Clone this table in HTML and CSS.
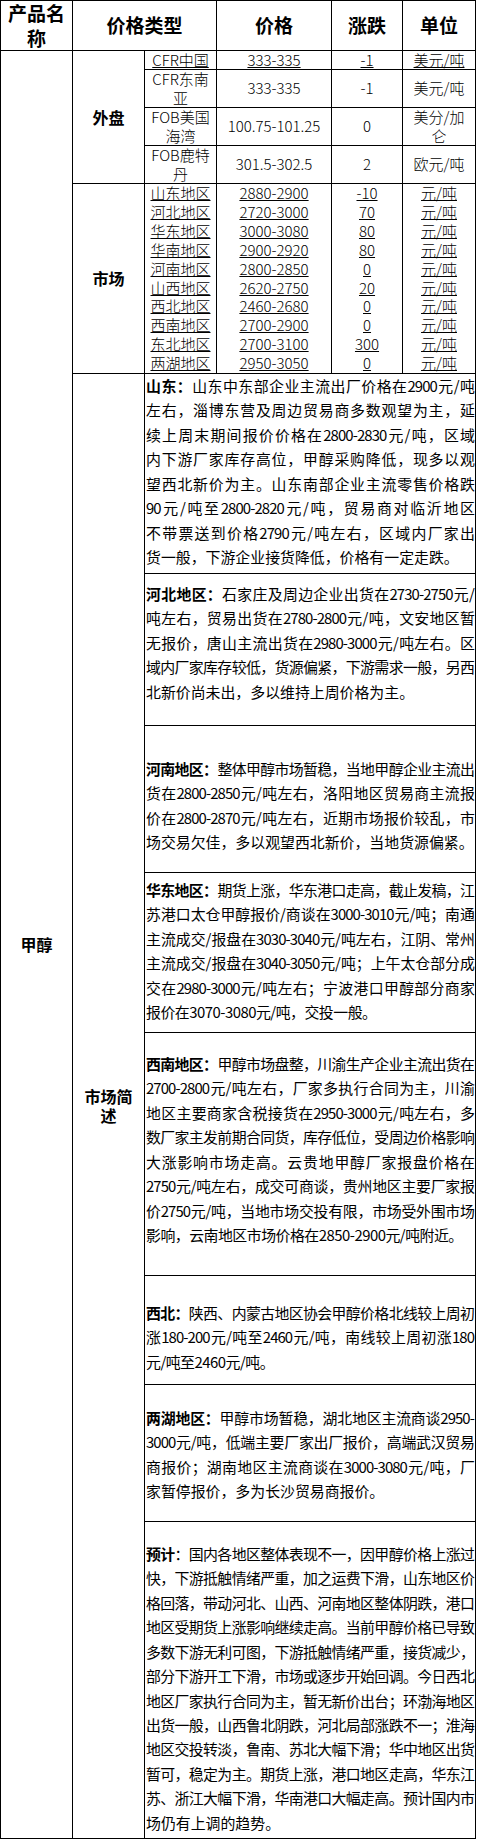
FILE: index.html
```html
<!DOCTYPE html>
<html lang="zh-CN">
<head>
<meta charset="utf-8">
<title>甲醇价格</title>
<link rel="stylesheet" href="styles.css">
</head>
<body>
<table class="price">
  <colgroup>
    <col class="c1"><col class="c2"><col class="c3"><col class="c4"><col class="c5"><col class="c6">
  </colgroup>
  <tr class="hd">
    <th>产品名称</th><th colspan="2">价格类型</th><th>价格</th><th>涨跌</th><th>单位</th>
  </tr>
  <tr class="w1 u">
    <td rowspan="22" class="prod">甲醇</td>
    <td rowspan="4" class="grp">外盘</td>
    <td>CFR中国</td><td>333-335</td><td>-1</td><td class="unit">美元/吨</td>
  </tr>
  <tr class="w2"><td>CFR东南亚</td><td>333-335</td><td>-1</td><td class="unit">美元/吨</td></tr>
  <tr class="w2"><td>FOB美国海湾</td><td>100.75-101.25</td><td>0</td><td class="unit">美分/加仑</td></tr>
  <tr class="w2"><td>FOB鹿特丹</td><td>301.5-302.5</td><td>2</td><td class="unit">欧元/吨</td></tr>
  <tr class="mk u">
    <td rowspan="10" class="grp">市场</td>
    <td>山东地区</td><td>2880-2900</td><td>-10</td><td class="unit">元/吨</td>
  </tr>
  <tr class="mk u"><td>河北地区</td><td>2720-3000</td><td>70</td><td class="unit">元/吨</td></tr>
  <tr class="mk u"><td>华东地区</td><td>3000-3080</td><td>80</td><td class="unit">元/吨</td></tr>
  <tr class="mk u"><td>华南地区</td><td>2900-2920</td><td>80</td><td class="unit">元/吨</td></tr>
  <tr class="mk u"><td>河南地区</td><td>2800-2850</td><td>0</td><td class="unit">元/吨</td></tr>
  <tr class="mk u"><td>山西地区</td><td>2620-2750</td><td>20</td><td class="unit">元/吨</td></tr>
  <tr class="mk u"><td>西北地区</td><td>2460-2680</td><td>0</td><td class="unit">元/吨</td></tr>
  <tr class="mk u"><td>西南地区</td><td>2700-2900</td><td>0</td><td class="unit">元/吨</td></tr>
  <tr class="mk u"><td>东北地区</td><td>2700-3100</td><td>300</td><td class="unit">元/吨</td></tr>
  <tr class="mk u"><td>两湖地区</td><td>2950-3050</td><td>0</td><td class="unit">元/吨</td></tr>
  <tr>
    <td rowspan="8" class="grp sum">市场简述</td>
    <td colspan="4" class="txt"><div class="desc s1">
      <span class="ln"><b>山东：</b>山东中东部企业主流出厂价格在2900元/吨</span>
      <span class="ln">左右，淄博东营及周边贸易商多数观望为主，延</span>
      <span class="ln">续上周末期间报价价格在2800-2830元/吨，区域</span>
      <span class="ln">内下游厂家库存高位，甲醇采购降低，现多以观</span>
      <span class="ln">望西北新价为主。山东南部企业主流零售价格跌</span>
      <span class="ln">90元/吨至2800-2820元/吨，贸易商对临沂地区</span>
      <span class="ln">不带票送到价格2790元/吨左右，区域内厂家出</span>
      <span class="ln end">货一般，下游企业接货降低，价格有一定走跌。</span>
    </div></td>
  </tr>
  <tr>
    <td colspan="4" class="txt"><div class="desc s2">
      <span class="ln"><b>河北地区：</b>石家庄及周边企业出货在2730-2750元/</span>
      <span class="ln">吨左右，贸易出货在2780-2800元/吨，文安地区暂</span>
      <span class="ln">无报价，唐山主流出货在2980-3000元/吨左右。区</span>
      <span class="ln">域内厂家库存较低，货源偏紧，下游需求一般，另西</span>
      <span class="ln end">北新价尚未出，多以维持上周价格为主。</span>
    </div></td>
  </tr>
  <tr>
    <td colspan="4" class="txt"><div class="desc s3">
      <span class="ln"><b>河南地区：</b>整体甲醇市场暂稳，当地甲醇企业主流出</span>
      <span class="ln">货在2800-2850元/吨左右，洛阳地区贸易商主流报</span>
      <span class="ln">价在2800-2870元/吨左右，近期市场报价较乱，市</span>
      <span class="ln end">场交易欠佳，多以观望西北新价，当地货源偏紧。</span>
    </div></td>
  </tr>
  <tr>
    <td colspan="4" class="txt"><div class="desc s4">
      <span class="ln"><b>华东地区：</b>期货上涨，华东港口走高，截止发稿，江</span>
      <span class="ln">苏港口太仓甲醇报价/商谈在3000-3010元/吨；南通</span>
      <span class="ln">主流成交/报盘在3030-3040元/吨左右，江阴、常州</span>
      <span class="ln">主流成交/报盘在3040-3050元/吨；上午太仓部分成</span>
      <span class="ln">交在2980-3000元/吨左右；宁波港口甲醇部分商家</span>
      <span class="ln end num">报价在3070-3080元/吨，交投一般。</span>
    </div></td>
  </tr>
  <tr>
    <td colspan="4" class="txt"><div class="desc s5">
      <span class="ln"><b>西南地区：</b>甲醇市场盘整，川渝生产企业主流出货在</span>
      <span class="ln">2700-2800元/吨左右，厂家多执行合同为主，川渝</span>
      <span class="ln">地区主要商家含税接货在2950-3000元/吨左右，多</span>
      <span class="ln">数厂家主发前期合同货，库存低位，受周边价格影响</span>
      <span class="ln">大涨影响市场走高。云贵地甲醇厂家报盘价格在</span>
      <span class="ln">2750元/吨左右，成交可商谈，贵州地区主要厂家报</span>
      <span class="ln">价2750元/吨，当地市场交投有限，市场受外围市场</span>
      <span class="ln end num">影响，云南地区市场价格在2850-2900元/吨附近。</span>
    </div></td>
  </tr>
  <tr>
    <td colspan="4" class="txt"><div class="desc s6">
      <span class="ln"><b>西北：</b>陕西、内蒙古地区协会甲醇价格北线较上周初</span>
      <span class="ln">涨180-200元/吨至2460元/吨，南线较上周初涨180</span>
      <span class="ln end num">元/吨至2460元/吨。</span>
    </div></td>
  </tr>
  <tr>
    <td colspan="4" class="txt"><div class="desc s7">
      <span class="ln"><b>两湖地区：</b>甲醇市场暂稳，湖北地区主流商谈2950-</span>
      <span class="ln">3000元/吨，低端主要厂家出厂报价，高端武汉贸易</span>
      <span class="ln">商报价；湖南地区主流商谈在3000-3080元/吨，厂</span>
      <span class="ln end">家暂停报价，多为长沙贸易商报价。</span>
    </div></td>
  </tr>
  <tr>
    <td colspan="4" class="txt"><div class="desc s8">
      <span class="ln"><b>预计</b>：国内各地区整体表现不一，因甲醇价格上涨过</span>
      <span class="ln">快，下游抵触情绪严重，加之运费下滑，山东地区价</span>
      <span class="ln">格回落，带动河北、山西、河南地区整体阴跌，港口</span>
      <span class="ln">地区受期货上涨影响继续走高。当前甲醇价格已导致</span>
      <span class="ln">多数下游无利可图，下游抵触情绪严重，接货减少，</span>
      <span class="ln">部分下游开工下滑，市场或逐步开始回调。今日西北</span>
      <span class="ln">地区厂家执行合同为主，暂无新价出台；环渤海地区</span>
      <span class="ln">出货一般，山西鲁北阴跌，河北局部涨跌不一；淮海</span>
      <span class="ln">地区交投转淡，鲁南、苏北大幅下滑；华中地区出货</span>
      <span class="ln">暂可，稳定为主。期货上涨，港口地区走高，华东江</span>
      <span class="ln">苏、浙江大幅下滑，华南港口大幅走高。预计国内市</span>
      <span class="ln end">场仍有上调的趋势。</span>
    </div></td>
  </tr>
</table>
</body>
</html>
```

FILE: styles.css
```css
html, body {
  margin: 0;
  padding: 0;
  background: #fff;
}

.price {
  border-collapse: collapse;
  table-layout: fixed;
  width: 475px;
  font-family: "Noto Sans CJK SC", sans-serif;
  color: #000;
}

.c1 { width: 72px; }
.c2 { width: 72px; }
.c3 { width: 72px; }
.c4 { width: 115px; }
.c5 { width: 71px; }
.c6 { width: 73px; }

.price th,
.price td {
  border: 1px solid #000;
  padding: 0 3px;
  text-align: center;
  vertical-align: middle;
  font-size: 15px;
  font-weight: 300;
  line-height: 18.5px;
  word-break: break-all;
}

.price td.unit {
  padding: 0 5px;
}

.price .hd th {
  font-size: 19px;
  font-weight: 700;
  line-height: 24.5px;
}

.price .w1 td {
  line-height: 18px;
}

.price .mk td {
  line-height: 18.9px;
  border-top-style: none;
  border-bottom-style: none;
}

.price .u > td:not(.grp):not(.prod) {
  text-decoration: underline;
  text-underline-offset: 1px;
}

.price td.prod,
.price td.grp {
  font-size: 16px;
  font-weight: 700;
  line-height: 19px;
  text-decoration: none;
}

.price td.sum {
  padding: 0 5px;
}

.price td.txt {
  padding: 0 1px;
  vertical-align: top;
  text-align: left;
}

.desc {
  box-sizing: border-box;
  font-size: 14.9px;
  font-weight: 400;
  line-height: 24.4px;
  text-autospace: no-autospace;
}

.desc b {
  font-weight: 700;
}

.ln {
  display: block;
  white-space: nowrap;
  letter-spacing: -0.9px;
  text-align: justify;
  text-align-last: justify;
}

.ln.end {
  letter-spacing: 0;
  text-align-last: left;
}

.ln.end.num {
  letter-spacing: -0.5px;
}

.s1 { height: 199px; padding-top: 0; }
.s2 { height: 151px; padding-top: 8px; }
.s3 { height: 146px; padding-top: 31px; }
.s4 { height: 159px; padding-top: 5px; }
.s5 { height: 242px; padding-top: 19px; }
.s6 { height: 108px; padding-top: 25px; }
.s7 { height: 136px; padding-top: 21px; }
.s8 { height: 316px; padding-top: 20px; }
```
